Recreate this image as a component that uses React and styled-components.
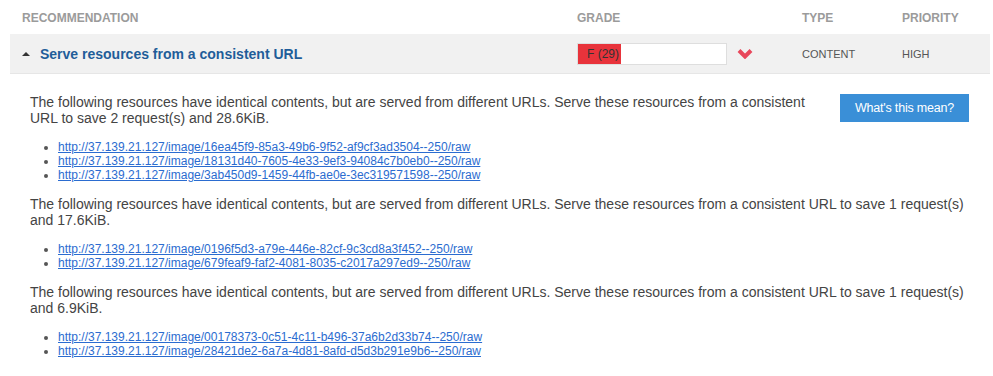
import React from "react";
import styled, { createGlobalStyle } from "styled-components";

const GlobalStyle = createGlobalStyle`
  html, body { margin: 0; padding: 0; background: #fff; }
  body { font-family: "Liberation Sans", Arial, Helvetica, sans-serif; }
`;

const Page = styled.div`
  width: 980px;
  padding-left: 10px;
`;

const Grid = styled.div`
  display: grid;
  grid-template-columns: 555px 225px 100px 1fr;
  align-items: center;
  padding-left: 12px;
  box-sizing: border-box;
`;

const HeaderRow = styled(Grid)`
  height: 34px;
  padding-top: 2px;
  box-sizing: border-box;
`;

const HeadCell = styled.div`
  font-size: 12px;
  font-weight: bold;
  color: #9b9b9b;
  text-transform: uppercase;
`;

const RecRow = styled(Grid)`
  height: 40px;
  background: #f1f1f1;
  border-bottom: 1px solid #e6e6e6;
`;

const TitleCell = styled.div`
  display: flex;
  align-items: center;
`;

const Caret = styled.span`
  width: 0;
  height: 0;
  border-left: 4px solid transparent;
  border-right: 4px solid transparent;
  border-bottom: 4px solid #333;
  margin-right: 10px;
`;

const Title = styled.a`
  font-size: 14px;
  font-weight: bold;
  color: #1f5d99;
  text-decoration: none;
`;

const GradeCell = styled.div`
  display: flex;
  align-items: center;
`;

const GradeTrack = styled.div`
  width: 150px;
  height: 22px;
  box-sizing: border-box;
  border: 1px solid #dedede;
  background: #fff;
  display: flex;
`;

const GradeFill = styled.div`
  background: #e8333b;
  color: #333;
  font-size: 12px;
  line-height: 20px;
  padding-left: 9px;
  box-sizing: border-box;
  white-space: nowrap;
`;

const Chevron = styled.svg`
  margin-left: 10px;
  display: block;
`;

const ValueCell = styled.div`
  font-size: 11px;
  color: #555;
  text-transform: uppercase;
`;

const Details = styled.div`
  padding: 20px 21px 0 20px;
`;

const Section = styled.div`
  display: flex;
  justify-content: space-between;
  align-items: flex-start;
`;

const Para = styled.p`
  margin: 0;
  font-size: 14px;
  line-height: 16px;
  color: #444;
  max-width: ${(p) => (p.$narrow ? "790px" : "none")};
`;

const Button = styled.button`
  width: 129px;
  height: 28px;
  border: none;
  background: #3a8fd7;
  color: #fff;
  font-family: "Liberation Sans", Arial, Helvetica, sans-serif;
  font-size: 12.5px;
  letter-spacing: -0.2px;
  padding: 0;
  cursor: pointer;
  flex: none;
`;

const List = styled.ul`
  margin: 14px 0;
  padding-left: 28px;
  font-size: 12px;
  line-height: 14px;
  color: #555;
`;

const Link = styled.a`
  color: #2b6cd0;
  text-decoration: underline;
`;

const groups = [
  {
    text:
      "The following resources have identical contents, but are served from different URLs. Serve these resources from a consistent URL to save 2 request(s) and 28.6KiB.",
    button: true,
    urls: [
      "http://37.139.21.127/image/16ea45f9-85a3-49b6-9f52-af9cf3ad3504--250/raw",
      "http://37.139.21.127/image/18131d40-7605-4e33-9ef3-94084c7b0eb0--250/raw",
      "http://37.139.21.127/image/3ab450d9-1459-44fb-ae0e-3ec319571598--250/raw",
    ],
  },
  {
    text:
      "The following resources have identical contents, but are served from different URLs. Serve these resources from a consistent URL to save 1 request(s) and 17.6KiB.",
    urls: [
      "http://37.139.21.127/image/0196f5d3-a79e-446e-82cf-9c3cd8a3f452--250/raw",
      "http://37.139.21.127/image/679feaf9-faf2-4081-8035-c2017a297ed9--250/raw",
    ],
  },
  {
    text:
      "The following resources have identical contents, but are served from different URLs. Serve these resources from a consistent URL to save 1 request(s) and 6.9KiB.",
    urls: [
      "http://37.139.21.127/image/00178373-0c51-4c11-b496-37a6b2d33b74--250/raw",
      "http://37.139.21.127/image/28421de2-6a7a-4d81-8afd-d5d3b291e9b6--250/raw",
    ],
  },
];

export default function App() {
  const score = 29;
  return (
    <>
      <GlobalStyle />
      <Page>
        <HeaderRow>
          <HeadCell>Recommendation</HeadCell>
          <HeadCell>Grade</HeadCell>
          <HeadCell>Type</HeadCell>
          <HeadCell>Priority</HeadCell>
        </HeaderRow>
        <RecRow>
          <TitleCell>
            <Caret />
            <Title href="#">Serve resources from a consistent URL</Title>
          </TitleCell>
          <GradeCell>
            <GradeTrack>
              <GradeFill style={{ width: `${score}%` }}>F (29)</GradeFill>
            </GradeTrack>
            <Chevron width="16" height="11" viewBox="0 0 16 11">
              <polyline
                points="2,2.5 8,8.5 14,2.5"
                fill="none"
                stroke="#e8475b"
                strokeWidth="4"
                strokeLinejoin="miter"
              />
            </Chevron>
          </GradeCell>
          <ValueCell>Content</ValueCell>
          <ValueCell>High</ValueCell>
        </RecRow>
        <Details>
          {groups.map((g, i) => (
            <div key={i}>
              <Section>
                <Para $narrow={g.button}>{g.text}</Para>
                {g.button && <Button>What's this mean?</Button>}
              </Section>
              <List>
                {g.urls.map((u) => (
                  <li key={u}>
                    <Link href="#">{u}</Link>
                  </li>
                ))}
              </List>
            </div>
          ))}
        </Details>
      </Page>
    </>
  );
}
